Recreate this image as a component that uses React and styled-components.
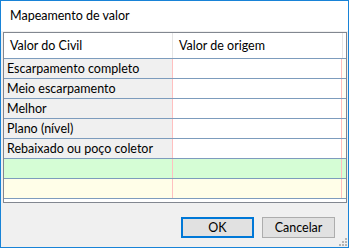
import styled, { createGlobalStyle } from 'styled-components';

const GlobalStyle = createGlobalStyle`
  body {
    margin: 0;
    background: #ffffff;
    font-family: "Segoe UI", Lato, "Noto Sans", sans-serif;
  }
`;

const rows = [
  { label: 'Escarpamento completo', kind: 'plain' },
  { label: 'Meio escarpamento', kind: 'plain' },
  { label: 'Melhor', kind: 'plain' },
  { label: 'Plano (nível)', kind: 'plain' },
  { label: 'Rebaixado ou poço coletor', kind: 'plain' },
  { label: '', kind: 'new' },
  { label: '', kind: 'filter' },
];

const rowBg = {
  plain: '#fffff4',
  new: '#d5fdd5',
  filter: '#fffee8',
};

const App = () => {
  return (
    <>
      <GlobalStyle />
      <Window>
        <TitleBar>Mapeamento de valor</TitleBar>
        <Body>
          <Grid>
            <HeaderRow>
              <HeaderCell>Valor do Civil</HeaderCell>
              <HeaderCell>Valor de origem</HeaderCell>
              <span />
            </HeaderRow>
            {rows.map((row, i) => (
              <Row key={i} $kind={row.kind}>
                <KeyCell $kind={row.kind}>{row.label}</KeyCell>
                <ValueCell $kind={row.kind} />
                <span />
              </Row>
            ))}
          </Grid>
          <Footer>
            <Button $primary type="button">OK</Button>
            <Button type="button">Cancelar</Button>
          </Footer>
        </Body>
        <Grip width="12" height="12" viewBox="0 0 12 12">
          {[
            [9, 3], [6, 6], [9, 6], [3, 9], [6, 9], [9, 9],
          ].map(([x, y]) => (
            <rect key={`${x}-${y}`} x={x} y={y} width="2" height="2" fill="#b4b4b4" />
          ))}
        </Grip>
      </Window>
    </>
  );
};

const Window = styled.div`
  position: relative;
  box-sizing: border-box;
  width: 349px;
  height: 248px;
  border: 1px solid #1883d7;
  background: #f0f0f0;
  display: flex;
  flex-direction: column;
  color: #000;
  font-size: 12.5px;
`;

const TitleBar = styled.div`
  height: 30px;
  flex-shrink: 0;
  background: #ffffff;
  display: flex;
  align-items: center;
  padding-left: 9px;
  padding-bottom: 1px;
  box-sizing: border-box;
`;

const Body = styled.div`
  flex: 1;
  display: flex;
  flex-direction: column;
  padding: 1px 1px 0 2px;
`;

const Grid = styled.div`
  box-sizing: border-box;
  height: 171px;
  border: 1px solid #828790;
  background: #ffffff;
`;

const HeaderRow = styled.div`
  display: grid;
  grid-template-columns: 169px 170px 1fr;
  height: 26px;
  box-sizing: border-box;
  border-bottom: 1px solid #7d9cbd;
`;

const HeaderCell = styled.div`
  display: flex;
  align-items: center;
  padding-left: 6px;
  border-right: 1px solid #e5e5e5;
`;

const Row = styled.div`
  display: grid;
  grid-template-columns: 168px 170px 1fr;
  height: 20px;
  box-sizing: border-box;
  border-bottom: 1px solid #7d9cbd;
  background: ${({ $kind }) => rowBg[$kind]};
`;

const KeyCell = styled.div`
  display: flex;
  align-items: center;
  padding-left: 3px;
  white-space: nowrap;
  background: ${({ $kind }) => ($kind === 'plain' ? '#f0f0f0' : rowBg[$kind])};
`;

const ValueCell = styled.div`
  border-left: 1px solid #ffc0c0;
  border-right: 1px solid #ffc0c0;
  background: ${({ $kind }) => ($kind === 'plain' ? '#ffffff' : rowBg[$kind])};
`;

const Footer = styled.div`
  flex: 1;
  display: flex;
  justify-content: flex-end;
  align-items: flex-end;
  gap: 8px;
  padding: 0 12px 9px 0;
`;

const Button = styled.button`
  box-sizing: border-box;
  width: 73px;
  height: 21px;
  padding: 0;
  font-family: inherit;
  font-size: 12.5px;
  color: #000;
  background: #e1e1e1;
  border: ${({ $primary }) => ($primary ? '2px solid #0078d7' : '1px solid #adadad')};
`;

const Grip = styled.svg`
  position: absolute;
  right: 0;
  bottom: 0;
`;

export default App;
